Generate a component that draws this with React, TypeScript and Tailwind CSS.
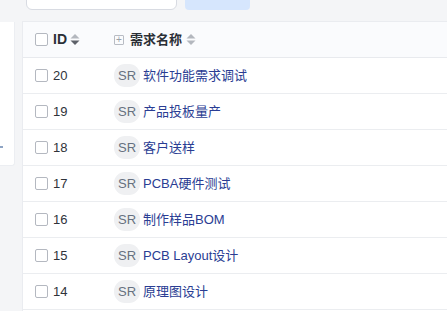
const rows = [
  { id: 20, name: '软件功能需求调试' },
  { id: 19, name: '产品投板量产' },
  { id: 18, name: '客户送样' },
  { id: 17, name: 'PCBA硬件测试' },
  { id: 16, name: '制作样品BOM' },
  { id: 15, name: 'PCB Layout设计' },
  { id: 14, name: '原理图设计' },
];

function Checkbox() {
  return <span className="block w-[13px] h-[13px] shrink-0 rounded-[2px] border border-[#b4b8c0] bg-white" />;
}

function SortIcon({ active }: { active?: boolean }) {
  return (
    <svg width="10" height="13" viewBox="0 0 10 13" className="shrink-0">
      <path d="M5 1 L9.5 5.5 L0.5 5.5 Z" fill="#b3b7be" />
      <path d="M5 12 L9.5 7.5 L0.5 7.5 Z" fill={active ? '#5d6169' : '#b3b7be'} />
    </svg>
  );
}

export default function App() {
  return (
    <div
      className="w-[447px] h-[311px] overflow-hidden bg-[#f4f5f7] flex flex-col"
      style={{ fontFamily: '"Liberation Sans", "Noto Sans CJK SC", sans-serif' }}
    >
      {/* toolbar, mostly scrolled out of view */}
      <div className="flex items-end h-[11px] shrink-0">
        <div className="ml-[26px] w-[151px] h-[34px] self-end mb-[1px] rounded-md border border-[#d8dbe2] bg-white" />
        <div className="ml-[8px] w-[65px] h-[30px] self-end mb-[1px] rounded-b-[4px] bg-[#d6e6fd] flex justify-end pr-[10px]">
          <span className="block w-[14px] h-[3px] rounded-b-[2px] bg-white" />
        </div>
      </div>

      <div className="flex gap-[7px] flex-1 min-h-0">
        <div className="w-[15px] h-[144px] mt-[11px] shrink-0 bg-white border-r border-b border-[#eceef2] rounded-br-[3px] flex flex-col justify-end pb-[17px]">
          <span className="block w-[3px] h-[2px] bg-[#8ea4c4]" />
        </div>

        <div className="flex-1 mt-[10px] bg-white border-l border-t border-[#eaecf0] text-[13px]">
          <div className="flex items-center h-[36px] bg-[#fafbfd] border-b border-[#e8eaee] font-bold text-[#2b2f36]">
            <div className="w-[91px] pl-[12px] flex items-center">
              <Checkbox />
              <span className="ml-[5px] text-[14px]">ID</span>
              <span className="ml-[3px]"><SortIcon active /></span>
            </div>
            <div className="flex items-center">
              <span className="w-[10px] h-[10px] border border-[#b8bcc4] rounded-[1px] flex items-center justify-center text-[#9aa0a8] text-[10px] leading-none font-normal">+</span>
              <span className="ml-[6px]">需求名称</span>
              <span className="ml-[4px]"><SortIcon /></span>
            </div>
          </div>

          {rows.map((r) => (
            <div key={r.id} className="flex items-center h-[36px] border-b border-[#ebedf0]">
              <div className="w-[91px] pl-[12px] flex items-center">
                <Checkbox />
                <span className="ml-[5px] text-[#2f333a]">{r.id}</span>
              </div>
              <span className="w-[26px] h-[23px] rounded-[11px] bg-[#eff0f2] text-[#667080] flex items-center justify-center">SR</span>
              <span className="ml-[3px] text-[#2a3d93]">{r.name}</span>
            </div>
          ))}
        </div>
      </div>
    </div>
  );
}
